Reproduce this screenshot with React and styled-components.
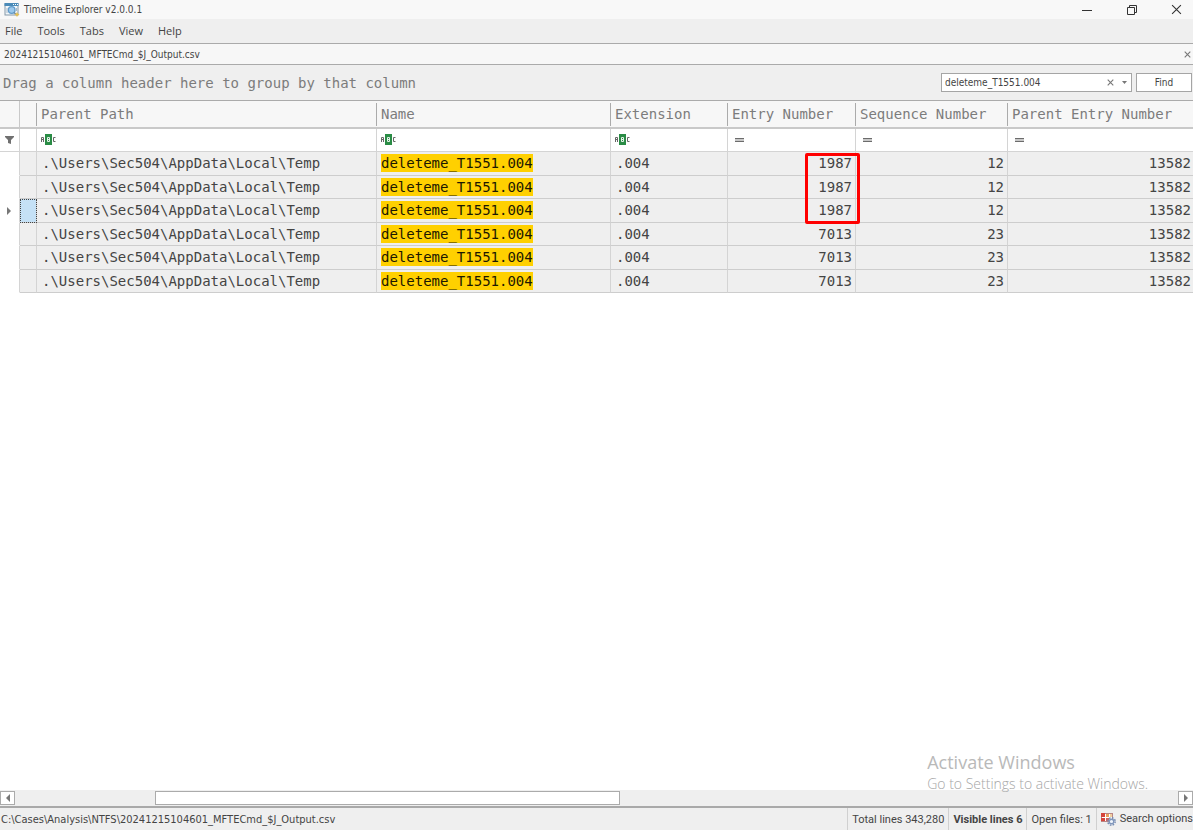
import styled, { createGlobalStyle } from 'styled-components'

const COLUMNS = [
    { key: 'path', title: 'Parent Path', width: 340, filter: 'text' },
    { key: 'name', title: 'Name', width: 234, filter: 'text' },
    { key: 'ext', title: 'Extension', width: 117, filter: 'text' },
    { key: 'entry', title: 'Entry Number', width: 128, filter: 'equals', numeric: true },
    { key: 'seq', title: 'Sequence Number', width: 152, filter: 'equals', numeric: true },
    { key: 'parent', title: 'Parent Entry Number', filter: 'equals', numeric: true },
]

const makeRow = (id, entry, seq) => ({
    id,
    path: '.\\Users\\Sec504\\AppData\\Local\\Temp',
    name: 'deleteme_T1551.004',
    ext: '.004',
    entry,
    seq,
    parent: 13582,
})

const ROWS = [
    makeRow(1, 1987, 12),
    makeRow(2, 1987, 12),
    makeRow(3, 1987, 12),
    makeRow(4, 7013, 23),
    makeRow(5, 7013, 23),
    makeRow(6, 7013, 23),
]

const FOCUSED_ROW = 3
const SCROLL = { start: 12, size: 40 }
const MENU = ['File', 'Tools', 'Tabs', 'View', 'Help']

const CONTROL_FONT = "'DejaVu Sans Condensed', 'Open Sans', sans-serif"
const GRID_FONT = "'DejaVu Sans Mono', monospace"

const GlobalStyle = createGlobalStyle`
    * {
        box-sizing: border-box;
    }

    body {
        margin: 0;
        background: #fff;
        color: #444;
        font-family: 'Open Sans', 'Noto Sans', sans-serif;
        font-size: 11px;
    }

    button, input {
        font: inherit;
        color: inherit;
        padding: 0;
        margin: 0;
        border: 0;
        border-radius: 0;
        background: none;
    }

    svg {
        display: block;
        flex: none;
    }
`

const Window = styled.div`
    display: flex;
    flex-direction: column;
    height: 100vh;
    overflow: hidden;
`

const TitleBar = styled.header`
    display: flex;
    align-items: center;
    height: 19px;
    padding-left: 4px;
    background: #f8f8f8;
`

const Title = styled.h1`
    flex: 1;
    margin: 0 0 0 4px;
    font-family: ${CONTROL_FONT};
    font-size: 10px;
    font-weight: normal;
`

const WindowButton = styled.button`
    display: flex;
    align-items: center;
    justify-content: center;
    width: 45px;
    height: 19px;
    padding-left: 12px;
`

const MenuBar = styled.nav`
    display: flex;
    align-items: center;
    gap: 15px;
    height: 24px;
    padding: 0 0 2px 5px;
    background: #efefef;
`

const TabBar = styled.div`
    display: flex;
    align-items: center;
    justify-content: space-between;
    height: 22px;
    padding: 0 2px 0 4px;
    border: solid #aaa;
    border-width: 1px 0;
    background: #f7f7f7;
    font-family: ${CONTROL_FONT};
    font-size: 10px;
`

const GroupPanel = styled.div`
    display: flex;
    align-items: center;
    height: 35px;
    padding: 0 1px 0 3px;
    background: #efefef;
    font-family: ${CONTROL_FONT};
    font-size: 10px;
`

const GroupHint = styled.span`
    flex: 1;
    color: #7c7c7c;
    font-family: ${GRID_FONT};
    font-size: 14px;
`

const SearchBox = styled.div`
    display: flex;
    align-items: center;
    gap: 8px;
    width: 191px;
    height: 19px;
    margin-right: 4px;
    padding: 0 4px 0 3px;
    border: 1px solid #a5a5a5;
    background: #fff;

    input {
        flex: 1;
        min-width: 0;
        height: 17px;
        outline: none;
        line-height: 17px;
    }
`

const FindButton = styled.button`
    width: 56px;
    height: 19px;
    border: 1px solid #a5a5a5;
    background: #fff;
`

const GridArea = styled.main`
    position: relative;
    flex: 1;
    min-height: 0;
    overflow: hidden;
    border-top: 1px solid #ababab;
`

const Grid = styled.table`
    width: 100%;
    table-layout: fixed;
    border-collapse: separate;
    border-spacing: 0;
    font-family: ${GRID_FONT};
    font-size: 14px;
    white-space: nowrap;

    th, td {
        padding: 0;
    }
`

const HeaderRow = styled.tr`
    height: 28px;
    background: #f7f7f7;
`

const HeaderCell = styled.th`
    border-bottom: 2px solid #c9c9c9;
    color: #7c7c7c;
    font-weight: normal;
    text-align: left;

    &:first-child {
        border-right: 1px solid #c9c9c9;
    }
`

const HeaderLabel = styled.div`
    height: 23px;
    padding-left: 4px;
    border-right: ${p => (p.$last ? 0 : 1)}px solid #ababab;
    line-height: 23px;
`

const FilterRow = styled.tr`
    height: 23px;
`

const FilterCell = styled.td`
    border-right: 1px solid #d4d4d4;
    border-bottom: 1px solid #d4d4d4;
    background: #fff;

    &:last-child {
        border-right: 0;
    }

    svg {
        margin-left: 4px;
    }
`

const DataRow = styled.tr`
    height: 24px;

    &:nth-child(even) {
        height: 23px;
    }
`

const Cell = styled.td`
    position: relative;
    border-right: 1px solid #d4d4d4;
    border-bottom: 1px solid #cdcdcd;
    background: #efefef;
    text-align: ${p => (p.$numeric ? 'right' : 'left')};
    vertical-align: top;

    &:last-child {
        border-right: 0;
    }
`

const CellText = styled.div`
    padding: 0 3px 0 ${p => (p.$indent ? 5 : 4)}px;
    line-height: 22px;

    ${Cell}:last-child & {
        padding-right: 2px;
    }
`

const IndicatorCell = styled(Cell)`
    border-bottom-color: #fff;
    background: #fff;
    vertical-align: middle;

    svg {
        margin-left: 7px;
    }
`

const MarkerCell = styled(Cell)`
    background: ${p => (p.$focused ? '#c5e1f6' : '#efefef')};
    outline: ${p => (p.$focused ? '1px dotted #444' : 'none')};
    outline-offset: -1px;
`

const Match = styled.mark`
    padding: 1px 0;
    background: #ffd000;
    color: #1c1800;
`

const Callout = styled.div`
    position: absolute;
    top: 1px;
    right: -5px;
    z-index: 1;
    width: 55px;
    height: 71px;
    border: 3px solid #ff0000;
    border-radius: 2px;
`

const Watermark = styled.aside`
    position: absolute;
    right: 45px;
    bottom: 37px;
    color: #a6a6a6;
    font-size: 14px;
    font-weight: 300;
    line-height: 19px;

    strong {
        display: block;
        color: #b9b9b9;
        font-size: 18px;
        font-weight: 400;
        line-height: 23px;
    }
`

const ScrollBar = styled.div`
    display: flex;
    height: 16px;
    background: #efefef;
`

const ScrollButton = styled.button`
    display: flex;
    align-items: center;
    justify-content: center;
    width: 15px;
    height: 14px;
    margin-top: 1px;
    border: 1px solid #ababab;
    background: #fff;
`

const ScrollTrack = styled.div`
    flex: 1;
`

const ScrollThumb = styled.div`
    height: 14px;
    margin-top: 1px;
    border: 1px solid #ababab;
    background: #fff;
`

const StatusBar = styled.footer`
    display: flex;
    height: 24px;
    border-top: 2px solid #a9a9a9;
    background: #efefef;
    font-family: Roboto, sans-serif;
    line-height: 24px;
    white-space: nowrap;
`

const StatusPath = styled.span`
    flex: 1;
    padding-left: 1px;
    font-family: ${CONTROL_FONT};
`

const StatusItem = styled.span`
    padding: 0 4px;
    border-left: 1px solid #d0d0d0;
    font-weight: ${p => (p.$bold ? 700 : 400)};
`

const StatusButton = styled.button`
    display: flex;
    align-items: center;
    gap: 4px;
    padding-left: 4px;
    border-left: 1px solid #d0d0d0;
`

const AppIcon = () => (
    <svg width="16" height="16" viewBox="0 0 16 16">
        <rect x="1" y="2" width="13" height="11" fill="#f3f7fa" stroke="#8398a8" />
        <rect x="0.5" y="1" width="14" height="3" fill="#4a8ab8" />
        <path d="M9 2.5h1M11 2.5h1M13 2.5h1" stroke="#fff" />
        <path d="M3 6v5M12.5 6v3" stroke="#a9bac7" />
        <circle cx="7.7" cy="8" r="3.3" fill="#9cc9ed" stroke="#5f9bcb" strokeWidth="1.3" />
        <path d="M10 10.5l2 2" stroke="#718b9d" strokeWidth="1.5" />
        <path d="M13 10l.9 1.6 1.6.9-1.6.9L13 15l-.9-1.6-1.6-.9 1.6-.9z" fill="#e3bf55" />
    </svg>
)

const CrossIcon = ({ size, color = '#777' }) => (
    <svg width={size} height={size} viewBox="0 0 10 10">
        <path d="M1 1l8 8M9 1l-8 8" stroke={color} strokeWidth={11 / size} fill="none" />
    </svg>
)

// small "ABC" glyph with the middle letter on a green tile
const TextFilterIcon = () => (
    <svg width="15" height="12" viewBox="0 0 15 12">
        <rect x="4" y="0" width="7" height="11" fill="#2a8c46" />
        <path d="M.5 8V3.5h2V8M.5 5.5h2M14.5 3.5h-2v4h2" fill="none" stroke="#666" />
        <path d="M6.5 3.5h2v4h-2zM6.5 5.5h2" fill="none" stroke="#e5f3e8" />
    </svg>
)

const EqualsIcon = () => (
    <svg width="15" height="12" viewBox="0 0 15 12">
        <rect x="3" y="4" width="9" height="4" fill="#c8c8c8" />
        <path d="M3 4.5h9M3 7.5h9" stroke="#6c6c6c" />
    </svg>
)

const FunnelIcon = () => (
    <svg width="11" height="8" viewBox="-1 0 11 8">
        <path d="M0 0h9v1L6 4v4L3 7V4L0 1z" fill="#707070" />
    </svg>
)

const ArrowIcon = ({ left }) => (
    <svg width="4" height="8" viewBox="0 0 4 8">
        <path d={left ? 'M4 0v8L0 4z' : 'M0 0v8l4-4z'} fill="#777" />
    </svg>
)

const OptionsIcon = () => (
    <svg width="15" height="14" viewBox="0 0 15 14">
        <rect x="0.5" y="1.5" width="11" height="8" fill="#fff" stroke="#b98585" />
        <path d="M0 1h4v4H0zM0 6h4v3H0z" fill="#d5453c" />
        <path d="M5 2h3v3H5z" fill="#eaa05a" />
        <path d="M5 6h3v3H5z" fill="#d5645c" />
        <path d="M9 2h2v3H9z" fill="#f0d0a0" />
        <circle cx="10.5" cy="9.5" r="3.7" fill="none" stroke="#7189b0" strokeWidth="1.4" strokeDasharray="1.6 1.3" />
        <circle cx="10.5" cy="9.5" r="2.3" fill="#eef3fa" stroke="#7f96bb" strokeWidth="1.4" />
    </svg>
)

const GridRow = ({ row, first }) => {
    const focused = row.id === FOCUSED_ROW

    return (
        <DataRow>
            <IndicatorCell>{focused && <ArrowIcon />}</IndicatorCell>
            <MarkerCell $focused={focused} />
            {COLUMNS.map(c =>
                <Cell key={c.key} $numeric={c.numeric}>
                    <CellText $indent={c.key === 'path' || c.key === 'ext'}>
                        {c.key === 'name' ? <Match>{row.name}</Match> : row[c.key]}
                    </CellText>
                    {first && c.key === 'entry' && <Callout />}
                </Cell>)
            }
        </DataRow>
    )
}

const App = () => (
    <>
        <GlobalStyle />
        <Window>
            <TitleBar>
                <AppIcon />
                <Title>Timeline Explorer v2.0.0.1</Title>
                <WindowButton aria-label="Minimize">
                    <svg width="10" height="10" viewBox="0 0 10 10">
                        <path d="M0 5.5h10" stroke="#333" />
                    </svg>
                </WindowButton>
                <WindowButton aria-label="Restore">
                    <svg width="10" height="10" viewBox="0 0 10 10">
                        <path d="M.5 2.5h7v7h-7zM2.5 2.5v-2h7v7h-2" fill="none" stroke="#333" />
                    </svg>
                </WindowButton>
                <WindowButton aria-label="Close">
                    <CrossIcon size={11} color="#333" />
                </WindowButton>
            </TitleBar>
            <MenuBar>
                {MENU.map(m => <button key={m}>{m}</button>)}
            </MenuBar>
            <TabBar>
                <button>20241215104601_MFTECmd_$J_Output.csv</button>
                <button aria-label="Close tab"><CrossIcon size={7} /></button>
            </TabBar>
            <GroupPanel>
                <GroupHint>Drag a column header here to group by that column</GroupHint>
                <SearchBox>
                    <input aria-label="Search" defaultValue="deleteme_T1551.004" />
                    <button aria-label="Clear"><CrossIcon size={7} /></button>
                    <button aria-label="History">
                        <svg width="5" height="3" viewBox="0 0 5 3">
                            <path d="M0 0h5L2.5 3z" fill="#777" />
                        </svg>
                    </button>
                </SearchBox>
                <FindButton>Find</FindButton>
            </GroupPanel>
            <GridArea>
                <Grid>
                    <colgroup>
                        <col width="20" />
                        <col width="17" />
                        {COLUMNS.map(c => <col key={c.key} width={c.width} />)}
                    </colgroup>
                    <thead>
                        <HeaderRow>
                            <HeaderCell />
                            <HeaderCell><HeaderLabel /></HeaderCell>
                            {COLUMNS.map(c =>
                                <HeaderCell key={c.key}>
                                    <HeaderLabel $last={c.key === 'parent'}>{c.title}</HeaderLabel>
                                </HeaderCell>)
                            }
                        </HeaderRow>
                        <FilterRow>
                            <FilterCell><FunnelIcon /></FilterCell>
                            <FilterCell />
                            {COLUMNS.map(c =>
                                <FilterCell key={c.key}>
                                    {c.filter === 'text' ? <TextFilterIcon /> : <EqualsIcon />}
                                </FilterCell>)
                            }
                        </FilterRow>
                    </thead>
                    <tbody>
                        {ROWS.map((r, i) => <GridRow key={r.id} row={r} first={i === 0} />)}
                    </tbody>
                </Grid>
            </GridArea>
            <ScrollBar>
                <ScrollButton aria-label="Scroll left"><ArrowIcon left /></ScrollButton>
                <ScrollTrack>
                    <ScrollThumb style={{ marginLeft: `${SCROLL.start}%`, width: `${SCROLL.size}%` }} />
                </ScrollTrack>
                <ScrollButton aria-label="Scroll right"><ArrowIcon /></ScrollButton>
            </ScrollBar>
            <StatusBar>
                <StatusPath>C:\Cases\Analysis\NTFS\20241215104601_MFTECmd_$J_Output.csv</StatusPath>
                <StatusItem>Total lines 343,280</StatusItem>
                <StatusItem $bold>Visible lines 6</StatusItem>
                <StatusItem>Open files: 1</StatusItem>
                <StatusButton><OptionsIcon />Search options</StatusButton>
            </StatusBar>
        </Window>
        <Watermark>
            <strong>Activate Windows</strong>
            Go to Settings to activate Windows.
        </Watermark>
    </>
)

export default App
